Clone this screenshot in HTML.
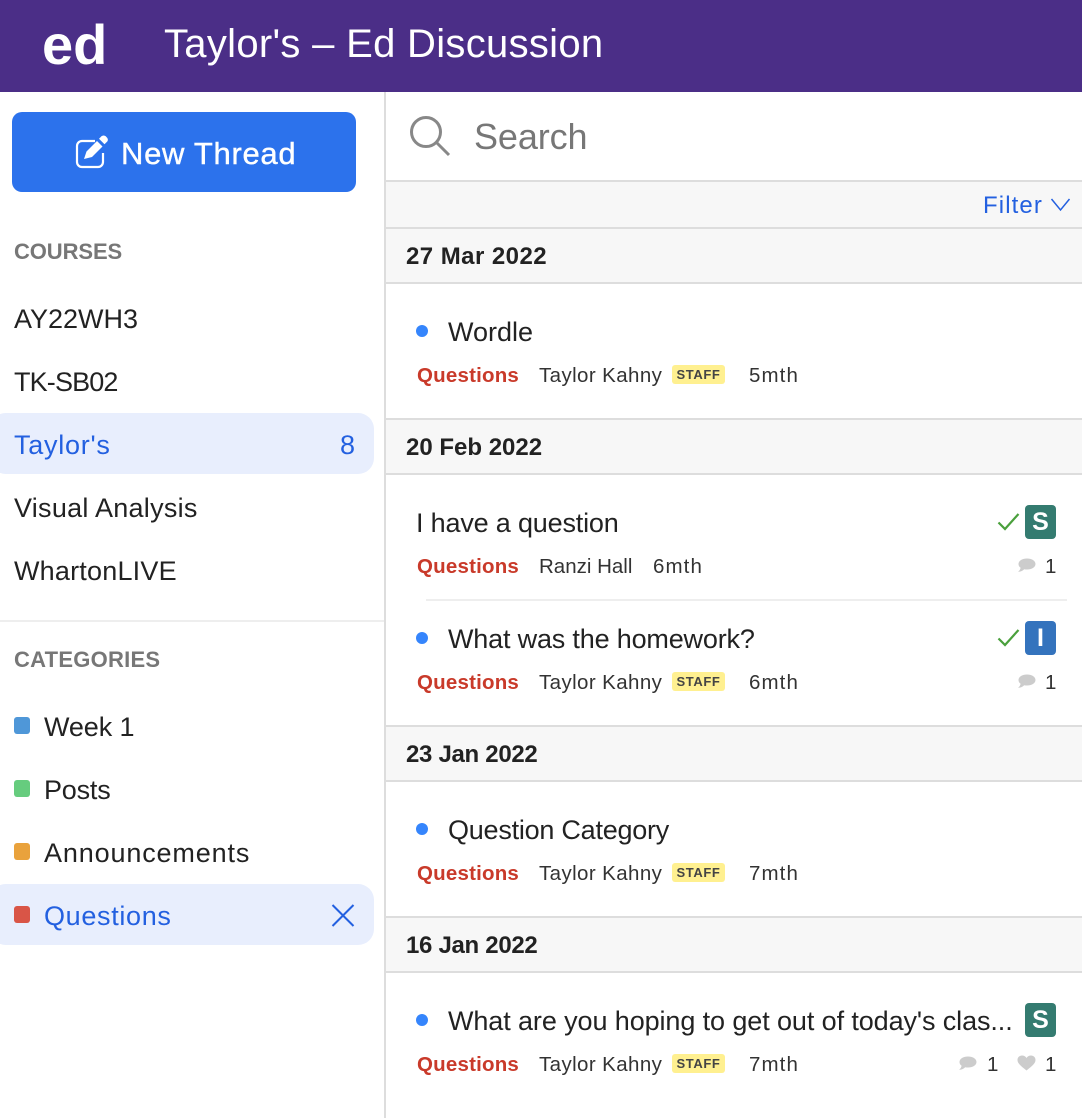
<!DOCTYPE html>
<html><head><meta charset="utf-8"><style>
html,body{margin:0;padding:0;background:#fff}
#p{position:relative;width:1082px;height:1118px;overflow:hidden;background:#fff;font-family:"Liberation Sans",sans-serif;color:#222}
.b{position:absolute}
.t{position:absolute;white-space:nowrap;line-height:40px;height:40px}
.n{font-size:27px}
.h{font-size:22px;font-weight:700;color:#777}
.d{font-size:24px;font-weight:700;color:#222;left:406px}
.m{font-size:20.5px;color:#333}
.k{letter-spacing:.4px}
.a{letter-spacing:1.1px}
.q{font-size:20.5px;font-weight:700;color:#c93a2a;left:417px;letter-spacing:.2px}
.s{position:absolute;left:672px;width:53px;height:19px;background:#fff090;border-radius:3px;text-align:center;font-size:13px;font-weight:700;line-height:19px;color:#444;letter-spacing:.6px}
.dot{position:absolute;left:416px;width:12px;height:12px;border-radius:50%;background:#3585fc}
.line{position:absolute;left:386px;right:0;height:2px;background:#ddd}
.bar{position:absolute;left:386px;right:0;background:#f7f7f7}
.sq{position:absolute;left:14px;width:16px;height:17px;border-radius:3px}
.badge{position:absolute;left:1025px;width:31px;height:34px;border-radius:4px;color:#fff;font-weight:700;font-size:25px;line-height:34px;text-align:center}
.c{position:absolute;overflow:visible}
</style></head><body><div id="p">
<div class="b" style="left:0;top:0;width:1082px;height:92px;background:#4b2e87"></div>
<div class="t" style="left:42px;top:22px;font-size:56px;font-weight:700;color:#fff;line-height:46px;height:46px">ed</div>
<div class="t" style="left:164px;top:24px;font-size:40px;color:#fff;letter-spacing:.3px">Taylor's – Ed Discussion</div>

<div class="b" style="left:384px;top:92px;width:2px;height:1026px;background:#ddd"></div>
<div class="b" style="left:12px;top:112px;width:344px;height:80px;background:#2c72ec;border-radius:10px"></div>
<svg class="c" style="left:74px;top:135px" width="36" height="36" viewBox="0 0 36 36"><path d="M21 6H8a5 5 0 0 0-5 5v16a5 5 0 0 0 5 5h16a5 5 0 0 0 5-5V18" fill="none" stroke="#fff" stroke-width="2.200"/><path d="M10 24L12.500 16.500L23 6L28.500 11.500L18 22Z" fill="#fff"/><path d="M25 3.800L27.500 1.300a3 3 0 0 1 4.200 0L33 2.600a3 3 0 0 1 0 4.200L30.500 9.300Z" fill="#fff"/></svg>
<div class="t" style="left:121px;top:134px;font-size:31px;color:#fff;letter-spacing:.7px;-webkit-text-stroke:.4px #fff">New Thread</div>

<div class="t h" style="left:14px;top:232px;letter-spacing:-.1px">COURSES</div>
<div class="t n" style="left:14px;top:299px">AY22WH3</div>
<div class="t n" style="left:14px;top:362px;letter-spacing:-.85px">TK-SB02</div>
<div class="b" style="left:-10px;top:413px;width:384px;height:61px;background:#e8eefd;border-radius:16px"></div>
<div class="t n" style="left:14px;top:425px;color:#2360e0;letter-spacing:.75px">Taylor's</div>
<div class="t n" style="left:340px;top:425px;color:#2360e0">8</div>
<div class="t n" style="left:14px;top:488px;letter-spacing:.27px">Visual Analysis</div>
<div class="t n" style="left:14px;top:551px;letter-spacing:.2px">WhartonLIVE</div>
<div class="b" style="left:0;top:620px;width:384px;height:2px;background:#eee"></div>
<div class="t h" style="left:14px;top:640px;letter-spacing:.25px">CATEGORIES</div>

<div class="sq" style="top:717px;background:#4f97d8"></div>
<div class="t n" style="left:44px;top:707px;letter-spacing:-.1px">Week 1</div>
<div class="sq" style="top:780px;background:#66cc7e"></div>
<div class="t n" style="left:44px;top:770px;letter-spacing:-.2px">Posts</div>
<div class="sq" style="top:843px;background:#e9a23c"></div>
<div class="t n" style="left:44px;top:833px;letter-spacing:.85px">Announcements</div>
<div class="b" style="left:-10px;top:884px;width:384px;height:61px;background:#e8eefd;border-radius:16px"></div>
<div class="sq" style="top:906px;background:#d95547"></div>
<div class="t n" style="left:44px;top:896px;color:#2360e0;letter-spacing:.67px">Questions</div>
<svg class="c" style="left:331px;top:904px" width="24" height="23" viewBox="0 0 24 23"><path d="M1.500 1L22.500 22M22.500 1L1.500 22" stroke="#2360e0" stroke-width="2" fill="none"/></svg>

<svg class="c" style="left:409px;top:114px" width="44" height="44" viewBox="0 0 44 44"><circle cx="17" cy="18" r="14.500" fill="none" stroke="#888" stroke-width="3"/><path d="M28 29L40 41" stroke="#888" stroke-width="3" fill="none"/></svg>
<div class="t" style="left:474px;top:117px;font-size:36px;color:#777;letter-spacing:-.1px">Search</div>

<div class="line" style="top:180px"></div>
<div class="bar" style="top:182px;height:45px"></div>
<div class="line" style="top:227px"></div>
<div class="t" style="left:983px;top:186px;font-size:24px;color:#2360e0;letter-spacing:1.1px">Filter</div>
<svg class="c" style="left:1050px;top:197px" width="22" height="16" viewBox="0 0 22 16"><path d="M1.500 2L10.500 13L19.500 2" fill="none" stroke="#2360e0" stroke-width="1.500"/></svg>

<div class="bar" style="top:229px;height:53px"></div><div class="line" style="top:282px"></div>
<div class="t d" style="top:237px;letter-spacing:.45px">27 Mar 2022</div>
<div class="dot" style="top:325px"></div>
<div class="t n" style="left:448px;top:312px">Wordle</div>
<div class="t q" style="top:356px">Questions</div>
<div class="t m k" style="left:539px;top:356px">Taylor Kahny</div>
<div class="s" style="top:365px">STAFF</div>
<div class="t m a" style="left:749px;top:356px">5mth</div>

<div class="line" style="top:418px"></div><div class="bar" style="top:420px;height:53px"></div><div class="line" style="top:473px"></div>
<div class="t d" style="top:428px">20 Feb 2022</div>
<div class="t n" style="left:416px;top:503px;letter-spacing:-.18px">I have a question</div>
<svg class="c" style="left:997px;top:512px" width="24" height="20" viewBox="0 0 24 20"><path d="M1.500 10.500L8 17L21.500 2" fill="none" stroke="#4aa03c" stroke-width="2.200"/></svg>
<div class="badge" style="top:505px;background:#347b70">S</div>
<div class="t q" style="top:547px">Questions</div>
<div class="t m" style="left:539px;top:547px">Ranzi Hall</div>
<div class="t m a" style="left:653px;top:547px">6mth</div>
<svg class="c" style="left:1018px;top:558px" width="18" height="16" viewBox="0 0 18 16"><path d="M9 0.500C13.700 0.500 17.500 2.800 17.500 6C17.500 9.200 13.700 11.500 9 11.500C8 11.500 7 11.400 6.200 11.200C4.800 12.800 2.600 13.600 0 13.800C1.600 12.600 2.400 11.200 2.600 9.800C1.200 8.800 0.500 7.500 0.500 6C0.500 2.800 4.300 0.500 9 0.500Z" fill="#ccc"/></svg>
<div class="t m" style="left:1045px;top:547px">1</div>
<div class="b" style="left:426px;top:599px;width:641px;height:2px;background:#eee"></div>
<div class="dot" style="top:632px"></div>
<div class="t n" style="left:448px;top:619px;letter-spacing:-.18px">What was the homework?</div>
<svg class="c" style="left:997px;top:628px" width="24" height="20" viewBox="0 0 24 20"><path d="M1.500 10.500L8 17L21.500 2" fill="none" stroke="#4aa03c" stroke-width="2.200"/></svg>
<div class="badge" style="top:621px;background:#3473bd">I</div>
<div class="t q" style="top:663px">Questions</div>
<div class="t m k" style="left:539px;top:663px">Taylor Kahny</div>
<div class="s" style="top:672px">STAFF</div>
<div class="t m a" style="left:749px;top:663px">6mth</div>
<svg class="c" style="left:1018px;top:674px" width="18" height="16" viewBox="0 0 18 16"><path d="M9 0.500C13.700 0.500 17.500 2.800 17.500 6C17.500 9.200 13.700 11.500 9 11.500C8 11.500 7 11.400 6.200 11.200C4.800 12.800 2.600 13.600 0 13.800C1.600 12.600 2.400 11.200 2.600 9.800C1.200 8.800 0.500 7.500 0.500 6C0.500 2.800 4.300 0.500 9 0.500Z" fill="#ccc"/></svg>
<div class="t m" style="left:1045px;top:663px">1</div>

<div class="line" style="top:725px"></div><div class="bar" style="top:727px;height:53px"></div><div class="line" style="top:780px"></div>
<div class="t d" style="top:735px;letter-spacing:-.3px">23 Jan 2022</div>
<div class="dot" style="top:823px"></div>
<div class="t n" style="left:448px;top:810px;letter-spacing:-.24px">Question Category</div>
<div class="t q" style="top:854px">Questions</div>
<div class="t m k" style="left:539px;top:854px">Taylor Kahny</div>
<div class="s" style="top:863px">STAFF</div>
<div class="t m a" style="left:749px;top:854px">7mth</div>

<div class="line" style="top:916px"></div><div class="bar" style="top:918px;height:53px"></div><div class="line" style="top:971px"></div>
<div class="t d" style="top:926px;letter-spacing:-.3px">16 Jan 2022</div>
<div class="dot" style="top:1014px"></div>
<div class="t n" style="left:448px;top:1001px;letter-spacing:-.1px">What are you hoping to get out of today's clas...</div>
<div class="badge" style="top:1003px;background:#347b70">S</div>
<div class="t q" style="top:1045px">Questions</div>
<div class="t m k" style="left:539px;top:1045px">Taylor Kahny</div>
<div class="s" style="top:1054px">STAFF</div>
<div class="t m a" style="left:749px;top:1045px">7mth</div>
<svg class="c" style="left:959px;top:1056px" width="18" height="16" viewBox="0 0 18 16"><path d="M9 0.500C13.700 0.500 17.500 2.800 17.500 6C17.500 9.200 13.700 11.500 9 11.500C8 11.500 7 11.400 6.200 11.200C4.800 12.800 2.600 13.600 0 13.800C1.600 12.600 2.400 11.200 2.600 9.800C1.200 8.800 0.500 7.500 0.500 6C0.500 2.800 4.300 0.500 9 0.500Z" fill="#ccc"/></svg>
<div class="t m" style="left:987px;top:1045px">1</div>
<svg class="c" style="left:1017px;top:1055px" width="19" height="16" viewBox="0 0 19 16"><path d="M9.500 15.500C4 11 0.500 8.500 0.500 5C0.500 2.300 2.500 0.500 5 0.500C6.800 0.500 8.500 1.400 9.500 3C10.500 1.400 12.200 0.500 14 0.500C16.500 0.500 18.500 2.300 18.500 5C18.500 8.500 15 11 9.500 15.500Z" fill="#ccc"/></svg>
<div class="t m" style="left:1045px;top:1045px">1</div>
</div></body></html>
